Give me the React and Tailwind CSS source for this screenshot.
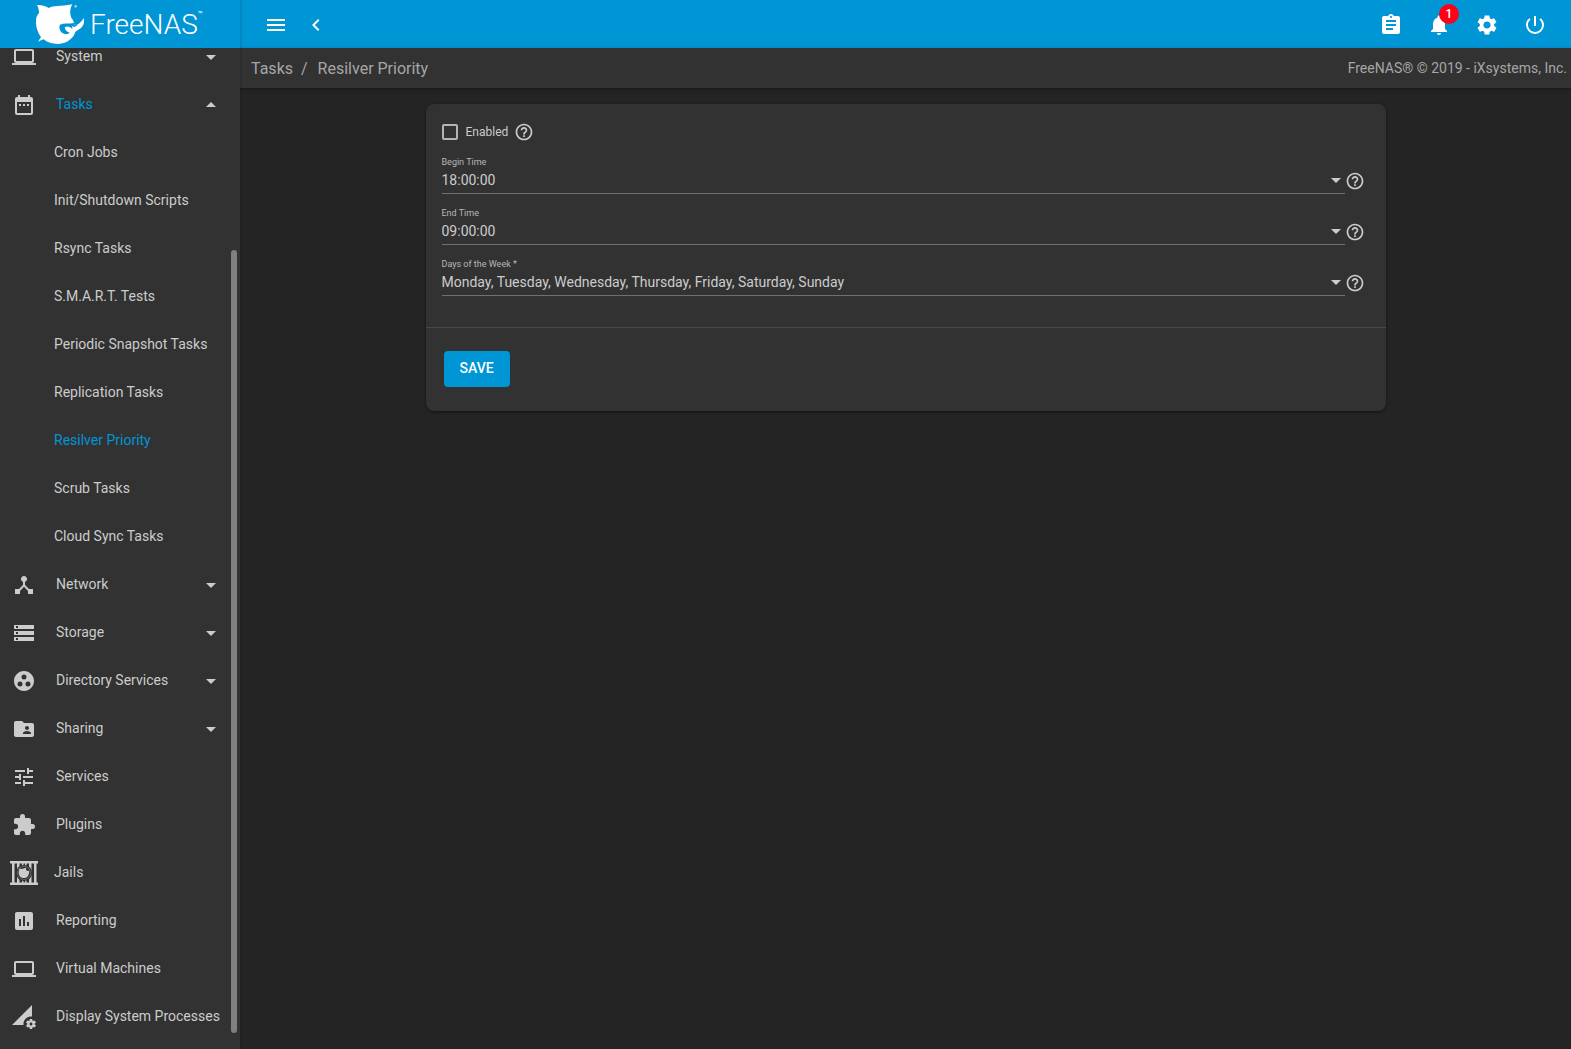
import {
  MdArrowDropDown,
  MdArrowDropUp,
  MdAssessment,
  MdAssignment,
  MdChevronLeft,
  MdDateRange,
  MdDeviceHub,
  MdExtension,
  MdFolderShared,
  MdGroupWork,
  MdHelpOutline,
  MdLaptop,
  MdMenu,
  MdNotifications,
  MdPermDataSetting,
  MdPowerSettingsNew,
  MdSettings,
  MdStorage,
  MdTune,
} from "react-icons/md";

function JailIcon() {
  return (
    <svg viewBox="0 0 28 24" className="h-6 w-7" fill="currentColor">
      <path d="M0 0h28v2.500H0zM0 21.500h28V24H0z" />
      <path d="M2 2h2.500v20H2zM7 2h2.500v20H7zM24 2h2.500v20H24zM19 2h2.500v20H19zM12 2h1.500v3H12zM15 2h1.500v3H15zM12 19h1.500v3H12zM15 19h1.500v3H15z" />
      <circle cx="14" cy="12" r="8" fill="#323232" />
      <circle cx="14" cy="12" r="6.600" fill="none" stroke="currentColor" strokeWidth="0.600" strokeOpacity="0.500" />
      <path d="M9.200 7.500l2.600.400 4.400-1.100-.2 2.200 1.500.900 1.700-.500c.2 4.500-1.800 7.600-5.200 7.600-3.400 0-5.300-2.400-5.300-5.300 0-1.700.9-2.600.5-4.200z" />
    </svg>
  );
}

function SharkLogo() {
  return (
    <svg viewBox="18 6 150 126" className="h-[42px] w-[50px]" fill="white">
      <path d="M21 12C32 11 46 15 57 21C70 13 90 17 127 10C119 24 119 38 124 50C128 55 131 60 132 67C133 71 136 73 141 71C148 68 155 62 161 51C164 62 161 75 152 82C146 87 140 89 136 93C131 110 114 127 84 129C66 129 51 124 41 115C36 117 30 119 25 123C27 117 30 113 33 108C22 94 17 76 18 59C18 48 22 42 27 36C27 27 25 19 21 12Z" />
      <path d="M90 71C101 66 116 69 132 66C133 72 136 74 143 71C138 77 132 79 125 75C127 79 128 82 127 84C121 78 112 74 104 79C105 87 110 93 119 95C110 104 92 98 89 84C88 79 88 75 90 71Z" fill="#0095d5" />
      <circle cx="137" cy="16" r="4" fillOpacity="0.6" />
    </svg>
  );
}

const menu = [
  { label: "System", icon: MdLaptop, arrow: "down" },
  {
    label: "Tasks",
    icon: MdDateRange,
    arrow: "up",
    active: true,
    children: [
      "Cron Jobs",
      "Init/Shutdown Scripts",
      "Rsync Tasks",
      "S.M.A.R.T. Tests",
      "Periodic Snapshot Tasks",
      "Replication Tasks",
      "Resilver Priority",
      "Scrub Tasks",
      "Cloud Sync Tasks",
    ],
  },
  { label: "Network", icon: MdDeviceHub, arrow: "down" },
  { label: "Storage", icon: MdStorage, arrow: "down" },
  { label: "Directory Services", icon: MdGroupWork, arrow: "down" },
  { label: "Sharing", icon: MdFolderShared, arrow: "down" },
  { label: "Services", icon: MdTune },
  { label: "Plugins", icon: MdExtension },
  { label: "Jails" },
  { label: "Reporting", icon: MdAssessment },
  { label: "Virtual Machines", icon: MdLaptop },
  { label: "Display System Processes", icon: MdPermDataSetting },
];

function MenuItem({ item }) {
  const Icon = item.icon;
  return (
    <li>
      <a href="#" className="flex h-12 items-center">
        {Icon ? (
          <span className="w-14 shrink-0 pt-0.5 pl-3">
            <Icon className="size-6" />
          </span>
        ) : (
          <span className="w-[54px] shrink-0 pt-0.5 pl-2.5">
            <JailIcon />
          </span>
        )}
        <span className={item.active ? "grow whitespace-nowrap text-[#0095d5]" : "grow whitespace-nowrap"}>
          {item.label}
        </span>
        {item.arrow && (
          <span className="pt-0.5 pr-[17px]">
            {item.arrow === "down" ? <MdArrowDropDown className="size-6" /> : <MdArrowDropUp className="size-6" />}
          </span>
        )}
      </a>
      {item.children && (
        <ul>
          {item.children.map((name) => (
            <li key={name}>
              <a
                href="#"
                className={
                  name === "Resilver Priority"
                    ? "flex h-12 items-center pl-[54px] text-[#0095d5]"
                    : "flex h-12 items-center pl-[54px]"
                }
              >
                {name}
              </a>
            </li>
          ))}
        </ul>
      )}
    </li>
  );
}

function Sidebar() {
  return (
    <aside className="relative z-10 flex w-60 shrink-0 flex-col bg-[#323232] shadow-[0_0_3px_rgba(0,0,0,0.3)]">
      <div className="flex h-12 shrink-0 items-center bg-[#0095d5] pl-9 text-white">
        <SharkLogo />
        <span className="ml-1 flex items-start pt-0.5 text-[28px] leading-8 font-light">
          FreeNAS
          <span className="text-[8px] leading-3 font-normal">™</span>
        </span>
      </div>
      <nav className="min-h-0 grow overflow-hidden text-sm text-[#cccccc]">
        <ul className="-mt-4">
          {menu.map((item) => (
            <MenuItem key={item.label} item={item} />
          ))}
        </ul>
      </nav>
      <div className="absolute top-[250px] right-[3px] bottom-4 w-1.5 rounded-full bg-[#808080]" />
    </aside>
  );
}

function TopBar() {
  return (
    <header className="flex h-12 shrink-0 items-center bg-[#0095d5] pt-0.5 text-white">
      <button aria-label="Toggle menu" className="ml-4 flex w-10 justify-center">
        <MdMenu className="size-6" />
      </button>
      <button aria-label="Collapse menu" className="flex w-10 justify-center">
        <MdChevronLeft className="size-6" />
      </button>
      <div className="mr-3 ml-auto flex">
        <button aria-label="Task manager" className="flex w-12 justify-center">
          <MdAssignment className="size-6" />
        </button>
        <button aria-label="Notifications" className="relative flex w-12 justify-center">
          <MdNotifications className="size-6" />
          <span className="absolute -top-[9px] right-1 flex size-5 items-center justify-center rounded-full bg-[#ff0016] text-xs font-medium">
            1
          </span>
        </button>
        <button aria-label="Settings" className="flex w-12 justify-center">
          <MdSettings className="size-6" />
        </button>
        <button aria-label="Power" className="flex w-12 justify-center">
          <MdPowerSettingsNew className="size-6" />
        </button>
      </div>
    </header>
  );
}

function SelectField({ id, label, value }) {
  return (
    <div className="flex h-[51px] items-start">
      <div className="grow border-b border-[#707070]">
        <label htmlFor={id} className="block h-4 text-[9px] leading-4 text-[#b8b8b8]">
          {label}
        </label>
        <div className="relative h-[23px]">
          <select
            id={id}
            defaultValue={value}
            className="block h-5 w-full appearance-none bg-transparent text-sm leading-5 text-[#cccccc] outline-none"
          >
            <option>{value}</option>
          </select>
          <MdArrowDropDown className="pointer-events-none absolute -top-0.5 -right-[3px] size-6 text-[#cccccc]" />
        </div>
      </div>
      <button type="button" aria-label={"Help for " + label} className="mt-[17px] text-[#cccccc]">
        <MdHelpOutline className="size-5" />
      </button>
    </div>
  );
}

function PriorityForm() {
  return (
    <form className="mx-auto mt-4 w-full max-w-[960px] rounded-lg bg-[#323232] pt-4 pb-6 shadow-[0_1px_3px_rgba(0,0,0,0.5)]">
      <div className="px-4">
        <div className="flex h-6 items-center text-xs text-[#cccccc]">
          <input
            id="enabled"
            type="checkbox"
            className="mr-2 size-4 appearance-none rounded-xs border-2 border-[#b4b4b4] checked:bg-[#0095d5]"
          />
          <label htmlFor="enabled">Enabled</label>
          <button type="button" aria-label="Help for Enabled" className="ml-1.5">
            <MdHelpOutline className="size-5" />
          </button>
        </div>
        <div className="mt-2.5 mr-[5px]">
          <SelectField id="begin" label="Begin Time" value="18:00:00" />
          <SelectField id="end" label="End Time" value="09:00:00" />
          <SelectField
            id="days"
            label="Days of the Week *"
            value="Monday, Tuesday, Wednesday, Thursday, Friday, Saturday, Sunday"
          />
        </div>
      </div>
      <div className="mt-5 border-t border-[#484848] pt-[23px] pl-[18px]">
        <button type="button" className="block h-9 rounded bg-[#0095d5] px-4 pb-0.5 text-sm font-medium text-white">
          SAVE
        </button>
      </div>
    </form>
  );
}

export default function App() {
  return (
    <div className="flex h-screen overflow-hidden bg-[#242424] font-['Roboto',sans-serif]">
      <Sidebar />
      <div className="flex min-w-0 grow flex-col">
        <TopBar />
        <div className="flex h-10 shrink-0 items-center bg-[#323232] pr-1 pl-[11px] text-[#a6a6a6] shadow-[0_1px_3px_rgba(0,0,0,0.4)]">
          <nav aria-label="Breadcrumb" className="flex pt-0.5">
            <a href="#">Tasks</a>
            <span className="mr-2.5 ml-2">/</span>
            <a href="#">Resilver Priority</a>
          </nav>
          <span className="ml-auto text-sm">FreeNAS® © 2019 - iXsystems, Inc.</span>
        </div>
        <main className="min-h-0 grow overflow-auto">
          <PriorityForm />
        </main>
      </div>
    </div>
  );
}
